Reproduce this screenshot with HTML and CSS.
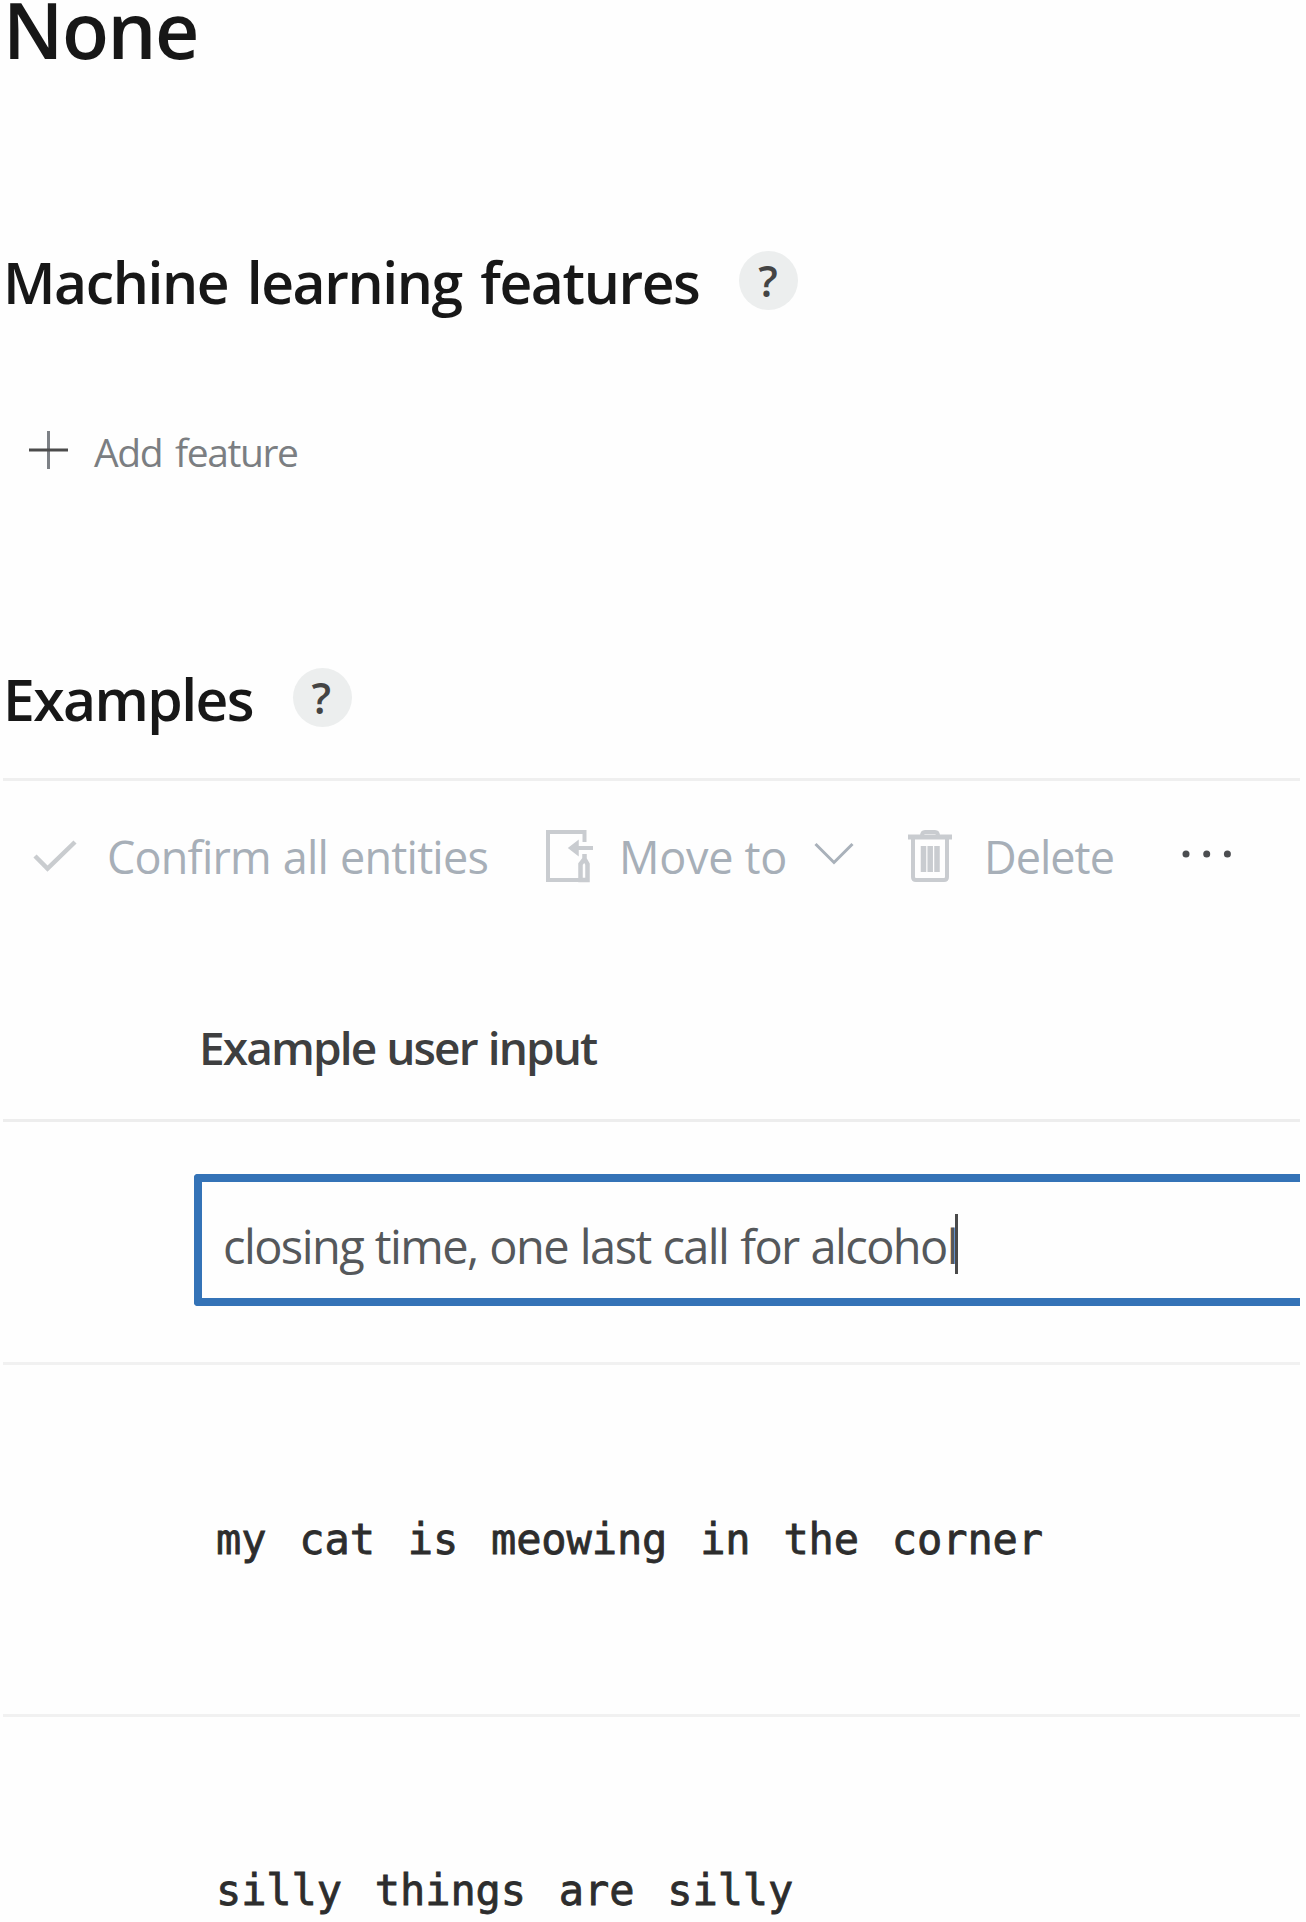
FILE: index.html
```
<!DOCTYPE html>
<html lang="en">
<head>
<meta charset="utf-8">
<title>None</title>
<link rel="stylesheet" href="styles.css">
</head>
<body>
<main class="page">
  <h1 class="title">None</h1>
  <div class="heading features"><h2>Machine learning features</h2><span class="help">?</span></div>
  <div class="add">
    <svg width="40" height="40" viewBox="0 0 40 40"><path d="M20.500 1v38" stroke="#7d8186" stroke-width="3"/><path d="M1 20h39" stroke="#4c4c4c" stroke-width="3"/></svg>
    <span>Add feature</span>
  </div>
  <div class="heading examples"><h2>Examples</h2><span class="help">?</span></div>
  <div class="toolbar">
    <button class="tool confirm">
      <svg width="44" height="32" viewBox="0 0 44 32"><path d="M2 16l12.500 12.500L42 2" fill="none" stroke="#c9cccf" stroke-width="4.500"/></svg>
      <span>Confirm all entities</span>
    </button>
    <button class="tool move">
      <svg width="48" height="54" viewBox="0 0 48 54" fill="none" stroke="#c9ccd0" stroke-width="4"><path d="M39.500 13V3H3v48h39"/><path d="M39.500 25v5l-4 5v16h7V35l-3-5" stroke-width="4.500"/><path d="M48 19H27"/><path d="M33 12l-9 7 9 7z" fill="#c9ccd0" stroke-width="1.500"/></svg>
      <span>Move to</span>
      <svg class="chevron" width="40" height="24" viewBox="0 0 40 24"><path d="M1.500 2L20 20.500 38.500 2" fill="none" stroke="#a9b1ba" stroke-width="3"/></svg>
    </button>
    <button class="tool delete">
      <svg width="46" height="54" viewBox="0 0 46 54" fill="none" stroke="#c9ccd0" stroke-width="4"><path d="M1 8h44" stroke-width="5"/><path d="M15 7q0-4 3-4h10q3 0 3 4"/><path d="M6 9v39q0 3 3 3h28q3 0 3-3V9"/><path d="M16.500 17v26M23.200 17v26M30 17v26" stroke-width="5.500"/></svg>
      <span>Delete</span>
    </button>
    <svg class="more" width="50" height="8" viewBox="0 0 50 8" fill="#4b4d50"><circle cx="4" cy="4" r="3.500"/><circle cx="24.700" cy="4" r="3.500"/><circle cx="45.400" cy="4" r="3.500"/></svg>
  </div>
  <div class="column-head">Example user input</div>
  <div class="row entry"><div class="field"><span>closing time, one last call for alcohol</span><i class="caret"></i></div></div>
  <div class="row utterance"><span>my cat is meowing in the corner</span></div>
  <div class="row utterance last"><span>silly things are silly</span></div>
</main>
</body>
</html>
```
FILE: styles.css
```
* { box-sizing: border-box; }
body {
  margin: 0;
  background: #fefefe;
  color: #171717;
  font-family: "Open Sans", "Noto Sans", sans-serif;
}
h1, h2 { margin: 0; font-weight: 600; white-space: nowrap; }
.page { height: 1922px; padding: 0 6px 0 3px; overflow: hidden; }
.title { height: 60px; font-size: 77px; line-height: 60px; letter-spacing: -1.4px; }
.heading { display: flex; align-items: center; height: 60px; gap: 40px; }
.heading h2 { padding-top: 3px; font-size: 57px; line-height: 60px; letter-spacing: -1.4px; word-spacing: 5px; }
.features { margin-top: 190px; }
.examples { gap: 40px; margin-top: 187px; }
.heading.examples h2 { letter-spacing: -1.6px; }
.help {
  display: flex; align-items: center; justify-content: center;
  width: 59px; height: 59px; padding: 1px 2px 0 0; border-radius: 50%;
  background: #eceeee; color: #444; font-size: 43px; font-weight: 600;
}
.add {
  display: flex; align-items: center; gap: 26px;
  height: 60px; margin-top: 110px; padding-left: 25px;
  color: #7b7e82; font-size: 39px; letter-spacing: -1.4px; word-spacing: 4px; white-space: nowrap;
}
.add span { padding-top: 2px; }
.toolbar {
  display: flex; align-items: center;
  height: 153px; margin-top: 51px; padding-left: 30px;
  border-top: 3px solid #efefef;
}
.tool {
  display: flex; align-items: center; padding: 0; border: 0; background: none;
  color: #a7afb8; font: 45px "Open Sans", sans-serif; white-space: nowrap;
}
.confirm { gap: 30px; letter-spacing: -0.8px; word-spacing: 1px; }
.move { gap: 26px; margin-left: 57px; letter-spacing: -0.3px; }
.chevron { margin: 0 0 5px 1px; }
.delete { gap: 31px; margin-left: 53px; letter-spacing: -1px; }
.more { margin: 0 0 4px 68px; }
.column-head {
  display: flex; align-items: center;
  height: 191px; padding: 44px 0 0 196px;
  border-bottom: 3px solid #ededed;
  color: #3e3f40; font-size: 46px; font-weight: 600; letter-spacing: -1.9px; word-spacing: 1px; white-space: nowrap;
}
.row { display: flex; align-items: center; border-bottom: 3px solid #f1f1f1; white-space: nowrap; }
.entry { height: 243px; padding: 0 0 4px 191px; }
.field {
  display: flex; align-items: center; flex: 1; height: 132px;
  padding: 12px 0 0 21px;
  border: 8px solid #3473b7; border-right: 0; border-radius: 4px 0 0 4px;
  color: #55585b; font-size: 47px; letter-spacing: -1.6px; word-spacing: 1.200px;
}
.caret { width: 3px; height: 60px; margin: 0 0 4px -2px; background: #4a4a4a; }
.utterance {
  height: 352px; padding-left: 213px;
  color: #2d2d2d; font: 42px/49px "DejaVu Sans Mono", monospace;
  letter-spacing: -0.1px; word-spacing: 7.700px;
  -webkit-text-stroke: 0.8px #2d2d2d;
}
.last { align-items: flex-start; height: 205px; padding-top: 149px; border-bottom: 0; }
```
